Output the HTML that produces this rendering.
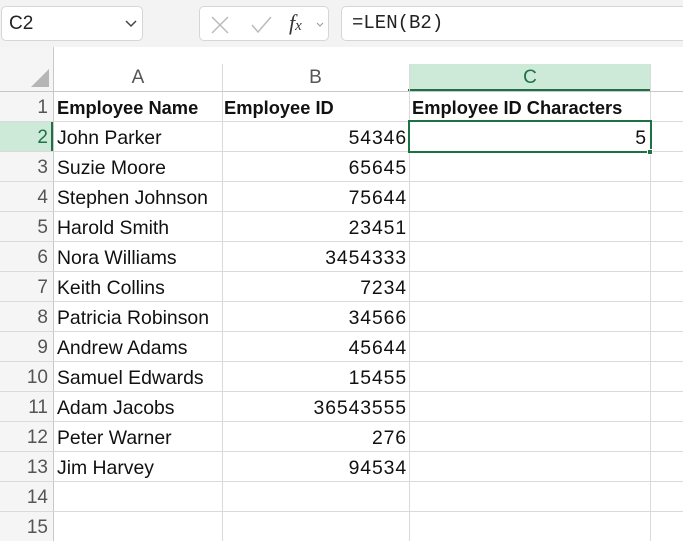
<!DOCTYPE html>
<html><head><style>
body{margin:0;width:683px;height:541px;overflow:hidden;background:#fff;font-family:"Liberation Sans",sans-serif;position:relative}
.a{position:absolute;box-sizing:border-box}
.top{left:0;top:0;width:683px;height:47px;background:#f3f3f3}
.box{background:#fff;border:1px solid #d6d6d6;border-radius:5px}
.cell{position:absolute;height:30px;line-height:30px;font-size:19.4px;color:#111;white-space:nowrap}
.num{letter-spacing:0.9px}
.rh{position:absolute;left:0;width:53px;height:30px;line-height:31px;text-align:right;padding-right:5px;box-sizing:border-box;font-size:19px;color:#555}
.hl{position:absolute;left:0;width:683px;height:1px;background:#dadada}
.vl{position:absolute;top:64px;width:1px;height:477px;background:#dadada}
.ch{position:absolute;top:64px;height:28px;line-height:28px;text-align:center;font-size:19px;color:#555}
</style></head><body>
<div class="a top"></div>
<div class="a box" style="left:1px;top:6px;width:142px;height:35px"><span style="position:absolute;left:7px;top:6px;font-size:19px;color:#222">C2</span><svg style="position:absolute;left:123px;top:13px" width="12" height="8"><path d="M1 1L6 6L11 1" stroke="#444" stroke-width="1.5" fill="none"/></svg></div>
<div class="a box" style="left:199px;top:6px;width:130px;height:35px"><svg style="position:absolute;left:10px;top:8px" width="110" height="20"><path d="M2 2L18 18M18 2L2 18" stroke="#bbb" stroke-width="1.5"/><path d="M42 10L48 17L61 2" stroke="#bbb" stroke-width="1.5" fill="none"/></svg><span style="position:absolute;left:89px;top:3px;font-style:italic;font-size:22px;font-family:'Liberation Serif',serif;color:#333">f<span style="font-size:15px">x</span></span><svg style="position:absolute;left:116px;top:15px" width="8" height="6"><path d="M1 1L4 4L7 1" stroke="#999" fill="none"/></svg></div>
<div class="a box" style="left:341px;top:6px;width:350px;height:35px"><span style="position:absolute;left:10px;top:5px;font-size:19px;font-family:'Liberation Mono',monospace;color:#222">=LEN(B2)</span></div>
<div class="a" style="left:0;top:47px;width:53px;height:494px;background:#f5f5f5"></div>
<div class="a" style="left:53px;top:47px;width:1px;height:494px;background:#c8c8c8"></div>
<svg class="a" style="left:30px;top:68px" width="20" height="20"><path d="M19 1L19 19L1 19Z" fill="#b5b5b5"/></svg>
<div class="a" style="left:409px;top:64px;width:242px;height:28px;background:#cde9d8"></div>
<div class="a" style="left:408px;top:89px;width:243px;height:3px;background:#1e7145"></div>
<div class="a" style="left:0;top:122px;width:53px;height:30px;background:#cde9d8"></div>
<div class="a" style="left:51px;top:121px;width:2px;height:31px;background:#1e7145"></div>
<div class="ch" style="left:54px;width:168px">A</div>
<div class="ch" style="left:222px;width:187px">B</div>
<div class="ch" style="left:409px;width:242px;color:#1e7145">C</div>
<div class="vl" style="left:222px"></div><div class="vl" style="left:409px"></div><div class="vl" style="left:650px"></div>
<div class="hl" style="top:91px;background:#c8c8c8"></div>
<div class="hl" style="top:121px"></div><div class="hl" style="top:151px"></div><div class="hl" style="top:181px"></div><div class="hl" style="top:211px"></div><div class="hl" style="top:241px"></div><div class="hl" style="top:271px"></div><div class="hl" style="top:301px"></div><div class="hl" style="top:331px"></div><div class="hl" style="top:361px"></div><div class="hl" style="top:391px"></div><div class="hl" style="top:421px"></div><div class="hl" style="top:451px"></div><div class="hl" style="top:481px"></div><div class="hl" style="top:511px"></div>
<div class="rh" style="top:92px">1</div>
<div class="rh" style="top:122px;color:#1e7145">2</div>
<div class="rh" style="top:152px">3</div>
<div class="rh" style="top:182px">4</div>
<div class="rh" style="top:212px">5</div>
<div class="rh" style="top:242px">6</div>
<div class="rh" style="top:272px">7</div>
<div class="rh" style="top:302px">8</div>
<div class="rh" style="top:332px">9</div>
<div class="rh" style="top:362px">10</div>
<div class="rh" style="top:392px">11</div>
<div class="rh" style="top:422px">12</div>
<div class="rh" style="top:452px">13</div>
<div class="rh" style="top:482px">14</div>
<div class="rh" style="top:512px">15</div>
<div class="cell" style="left:57px;top:93px;font-weight:bold;font-size:18.3px">Employee Name</div>
<div class="cell" style="left:224px;top:93px;font-weight:bold;font-size:18.3px">Employee ID</div>
<div class="cell" style="left:412px;top:93px;font-weight:bold;font-size:18.3px">Employee ID Characters</div>
<div class="cell" style="left:57px;top:123px">John Parker</div>
<div class="cell" style="left:57px;top:153px">Suzie Moore</div>
<div class="cell" style="left:57px;top:183px">Stephen Johnson</div>
<div class="cell" style="left:57px;top:213px">Harold Smith</div>
<div class="cell" style="left:57px;top:243px">Nora Williams</div>
<div class="cell" style="left:57px;top:273px">Keith Collins</div>
<div class="cell" style="left:57px;top:303px">Patricia Robinson</div>
<div class="cell" style="left:57px;top:333px">Andrew Adams</div>
<div class="cell" style="left:57px;top:363px">Samuel Edwards</div>
<div class="cell" style="left:57px;top:393px">Adam Jacobs</div>
<div class="cell" style="left:57px;top:423px">Peter Warner</div>
<div class="cell" style="left:57px;top:453px">Jim Harvey</div>
<div style="position:absolute;left:222px;top:0;width:185px">
<div class="cell num" style="right:0;top:123px">54346</div>
<div class="cell num" style="right:0;top:153px">65645</div>
<div class="cell num" style="right:0;top:183px">75644</div>
<div class="cell num" style="right:0;top:213px">23451</div>
<div class="cell num" style="right:0;top:243px">3454333</div>
<div class="cell num" style="right:0;top:273px">7234</div>
<div class="cell num" style="right:0;top:303px">34566</div>
<div class="cell num" style="right:0;top:333px">45644</div>
<div class="cell num" style="right:0;top:363px">15455</div>
<div class="cell num" style="right:0;top:393px">36543555</div>
<div class="cell num" style="right:0;top:423px">276</div>
<div class="cell num" style="right:0;top:453px">94534</div>
</div>
<div class="a" style="left:408px;top:120px;width:244px;height:33px;border:2.5px solid #1e7145"></div>
<div class="cell" style="left:620px;top:123px;width:26px;text-align:right">5</div>
<div class="a" style="left:647px;top:149px;width:6px;height:6px;background:#1e7145;border:1px solid #fff"></div>
</body></html>
